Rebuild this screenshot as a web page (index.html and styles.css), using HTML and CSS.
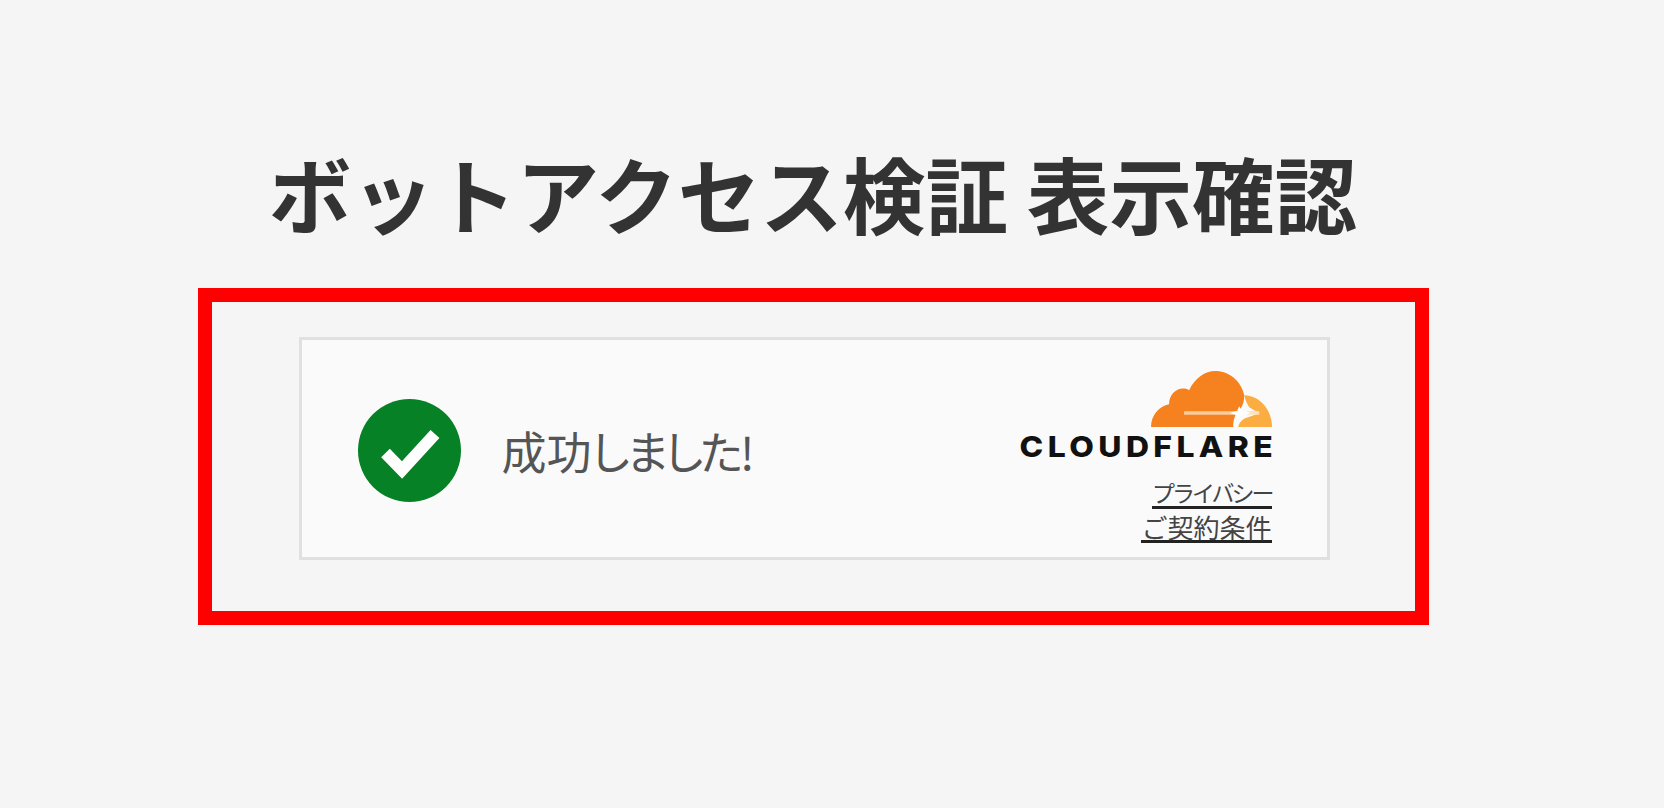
FILE: index.html
```html
<!DOCTYPE html>
<html lang="ja">
<head>
    <meta charset="UTF-8">
    <title>ボットアクセス検証 表示確認</title>
    <link rel="stylesheet" href="styles.css">
</head>
<body>
    <main class="page">
        <h1>ボットアクセス検証 表示確認</h1>
        <div class="red_box">
            <div class="widget">
                <div class="status">
                    <svg class="check" viewBox="0 0 103 103">
                        <circle cx="51.5" cy="51.5" r="51.5" fill="#068125"/>
                        <path d="M27.5 54 L44 71 L77 35" fill="none" stroke="#fff" stroke-width="12"/>
                    </svg>
                    <span class="status_text">成功<span class="kana">しました!</span></span>
                </div>
                <div class="brand">
                    <svg class="cloud" viewBox="0 0 120.7 55.7">
                        <path fill="#f6821f" d="M0 55.7 C0 44 8 35 18 33 C18 22 28 14 38 19 C44 7 54 0 64 0 C78 0 90 10 93 24 C93 29 92 34 89 38 C84 42 82 48 82 55.7 Z"/>
                        <path fill="#fbad41" d="M93 24 C108 24 120.7 38 120.7 55.7 L87 55.7 C88 51 92 47 97 46 L108 42 L98 36 C96 33 94 29 93 24 Z"/>
                        <path fill="#fbcb9c" d="M33 40 H84 V43.5 H33 Z"/>
                        <path fill="#fde0bd" d="M96 40 H108 V43.5 H96 Z"/>
                        <path fill="#fff" d="M88 35 L90.5 39.5 L100 41.7 L90.5 44 L86.5 49 L86 44 L78 41.7 L86 39.5 Z"/>
                    </svg>
                    <div class="wordmark">CLOUDFLARE</div>
                    <div class="links">
                        <a class="link_privacy">プライバシー</a>
                        <a class="link_terms">ご契約条件</a>
                    </div>
                </div>
            </div>
        </div>
    </main>
</body>
</html>
```
FILE: styles.css
```css
body{
    margin: 0;
    height: 808px;
    overflow: hidden;
    background-color: #f5f5f5;
    font-family: "Noto Sans CJK JP", "Liberation Sans", sans-serif;
}
.page{
    width: 1626px;
    display: flex;
    flex-direction: column;
    align-items: center;
    padding-top: 139px;
}
h1{
    margin: 0 0 42px;
    font-size: 82.6px;
    line-height: 107px;
    font-weight: 700;
    color: #333;
}
.red_box{
    box-sizing: border-box;
    width: 1231px;
    height: 337px;
    padding: 35px 85px 0 87px;
    border: 14px solid #ff0000;
}
.widget{
    box-sizing: border-box;
    height: 223px;
    padding: 4px 55px 0 56px;
    display: flex;
    justify-content: space-between;
    background-color: #fafafa;
    border: 3px solid #e0e0e0;
}
.status{
    display: flex;
    align-items: center;
    gap: 41px;
}
.check{
    width: 103px;
    height: 103px;
}
.status_text{
    font-size: 45px;
    font-weight: 400;
    color: #555;
}
.kana{
    font-feature-settings: "palt";
    letter-spacing: -3px;
}
.brand{
    display: flex;
    flex-direction: column;
    align-items: flex-end;
    padding-top: 27px;
}
.cloud{
    width: 121px;
    height: 56px;
    display: block;
}
.wordmark{
    margin-top: 6px;
    font-family: "Inter", "Liberation Sans", sans-serif;
    font-size: 29px;
    line-height: 28px;
    font-weight: 800;
    letter-spacing: 4px;
    margin-right: -6px;
    color: #111;
    transform: scaleX(1.1);
    transform-origin: right center;
}
.links{
    margin-top: 18px;
    display: flex;
    flex-direction: column;
    align-items: flex-end;
    color: #444;
}
.links a{
    display: block;
    line-height: 27px;
    border-bottom: 3px solid #222;
}
.link_privacy{
    font-size: 23px;
    letter-spacing: -3px;
    margin-bottom: 4px;
}
.link_terms{
    font-size: 26px;
}
```
